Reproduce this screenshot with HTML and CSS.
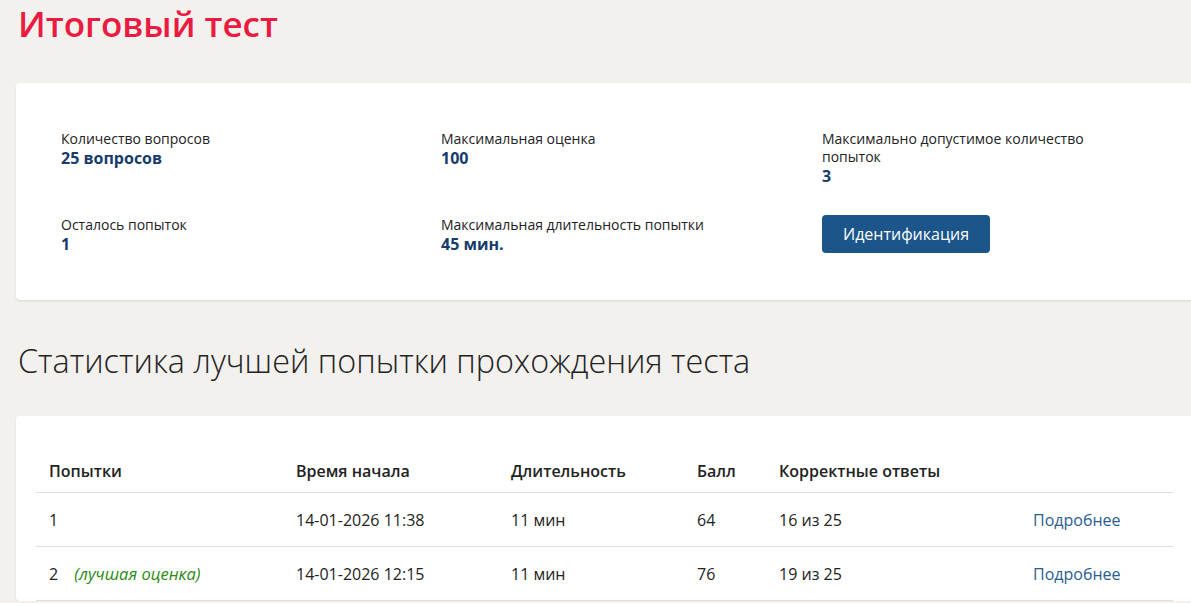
FILE: index.html
```html
<!DOCTYPE html>
<html lang="ru">
<head>
    <meta charset="UTF-8">
    <meta name="viewport" content="width=device-width, initial-scale=1.0">
    <title>Итоговый тест</title>
    <link rel="stylesheet" href="styles.css">
</head>
<body>
    <div class="page">
        <h1 class="title">Итоговый тест</h1>

        <div class="card info">
            <div class="info-grid">
                <div class="item">
                    <div class="label">Количество вопросов</div>
                    <div class="value">25 вопросов</div>
                </div>
                <div class="item">
                    <div class="label">Максимальная оценка</div>
                    <div class="value">100</div>
                </div>
                <div class="item">
                    <div class="label">Максимально допустимое количество попыток</div>
                    <div class="value">3</div>
                </div>
                <div class="item">
                    <div class="label">Осталось попыток</div>
                    <div class="value">1</div>
                </div>
                <div class="item">
                    <div class="label">Максимальная длительность попытки</div>
                    <div class="value">45 мин.</div>
                </div>
                <div class="item">
                    <button class="btn">Идентификация</button>
                </div>
            </div>
        </div>

        <h2 class="subtitle">Статистика лучшей попытки прохождения теста</h2>

        <div class="card stats">
            <table class="attempts">
                <thead>
                    <tr>
                        <th class="c-num">Попытки</th>
                        <th class="c-start">Время начала</th>
                        <th class="c-dur">Длительность</th>
                        <th class="c-score">Балл</th>
                        <th class="c-correct">Корректные ответы</th>
                        <th class="c-link"></th>
                    </tr>
                </thead>
                <tbody>
                    <tr>
                        <td>1</td>
                        <td>14-01-2026 11:38</td>
                        <td>11 мин</td>
                        <td>64</td>
                        <td>16 из 25</td>
                        <td><a href="#">Подробнее</a></td>
                    </tr>
                    <tr>
                        <td>2 <span class="best">(лучшая оценка)</span></td>
                        <td>14-01-2026 12:15</td>
                        <td>11 мин</td>
                        <td>76</td>
                        <td>19 из 25</td>
                        <td><a href="#">Подробнее</a></td>
                    </tr>
                </tbody>
            </table>
        </div>
    </div>
</body>
</html>
```

FILE: styles.css
```css
body {
    margin: 0;
    background: #f2f1ee;
    color: #222;
    font-family: 'Open Sans', 'Noto Sans', sans-serif;
    overflow-x: hidden;
}

.page {
    padding-left: 16px;
}

.title {
    margin: 0;
    padding: 2px 0 0 2px;
    font-size: 35px;
    font-weight: 600;
    line-height: 44px;
    color: #ea1a40;
}

.card {
    background: #fff;
    border-radius: 4px 0 0 4px;
    box-shadow: 0 1px 2px rgba(0, 0, 0, 0.12);
}

.info {
    margin-top: 37px;
    padding: 47px 45px 46px;
}

.info-grid {
    display: grid;
    grid-template-columns: 380px 381px 300px;
    row-gap: 30px;
}

.label {
    font-size: 14px;
    line-height: 18px;
    color: #222;
}

.value {
    font-size: 16px;
    line-height: 20px;
    font-weight: 700;
    color: #163c6b;
}

.btn {
    display: block;
    margin-top: -1px;
    height: 38px;
    padding: 0 21px;
    background: #1b558a;
    color: #fff;
    border: none;
    border-radius: 4px;
    font-family: inherit;
    font-size: 16px;
    cursor: pointer;
}

.subtitle {
    margin: 0;
    padding: 40px 0 36px 2px;
    font-size: 32.4px;
    font-weight: 300;
    line-height: 40px;
    color: #222;
}

.stats {
    padding: 11px 18px 0 20px;
}

.attempts {
    width: 100%;
    border-collapse: collapse;
    font-size: 16px;
}

.attempts th {
    text-align: left;
    font-weight: 600;
    height: 56px;
    vertical-align: bottom;
    padding: 0 13px 9px;
    line-height: 24px;
    border-bottom: 1px solid #dedede;
}

.attempts td {
    height: 53px;
    padding: 0 13px;
    line-height: 24px;
    border-bottom: 1px solid #dedede;
}

.c-num { width: 221px; }
.c-start { width: 189px; }
.c-dur { width: 160px; }
.c-score { width: 56px; }
.c-correct { width: 228px; }

.attempts a {
    color: #2a5d90;
    text-decoration: none;
}

.best {
    margin-left: 12px;
    font-size: 16.5px;
    font-style: italic;
    color: #2b8a14;
}
```
